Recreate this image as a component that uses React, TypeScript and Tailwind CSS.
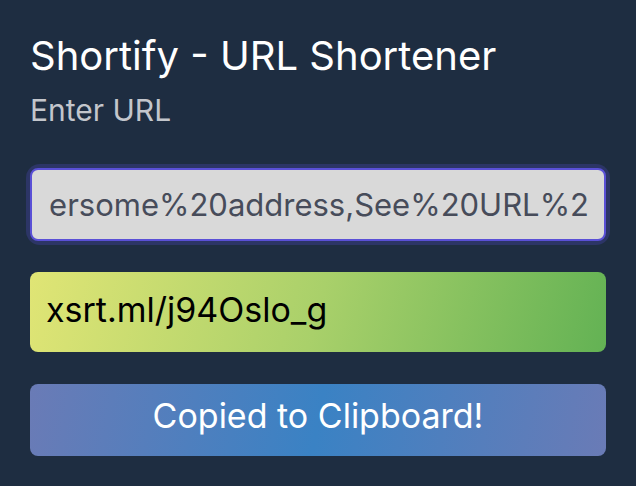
import React from "react";

export default function App() {
  return (
    <div
      className="min-h-screen w-full bg-[#1e2d41] px-[30px] pt-[32px]"
      style={{ fontFamily: "Inter, 'Noto Sans', sans-serif" }}
    >
      <h1 className="text-[40px] leading-[48px] font-normal text-white">
        Shortify - URL Shortener
      </h1>
      <p className="mt-[12px] text-[30px] leading-[36px] text-[#c3c6cc]">Enter URL</p>

      <div className="mt-[40px] rounded-[10px] ring-4 ring-[#2c3566]">
        <div className="flex h-[73px] items-center justify-end overflow-hidden rounded-[8px] border-2 border-[#5a50d6] bg-[#d9d9d9] pr-[15px] pl-[18px]">
          <span className="whitespace-nowrap text-[31px] leading-[38px] text-[#474c5a]">
            ersome%20address,See%20URL%2
          </span>
        </div>
      </div>

      <div className="mt-[31px] flex h-[80px] items-center rounded-[8px] bg-[linear-gradient(105deg,#e0e575_0%,#a9d06a_50%,#63b254_100%)] px-[16px] pb-[5px]">
        <span className="text-[34px] leading-[40px] text-black">xsrt.ml/j94Oslo_g</span>
      </div>

      <button className="mt-[32px] flex h-[72px] w-full items-center justify-center rounded-[8px] bg-[linear-gradient(100deg,#6a7bb6_0%,#3a82c4_50%,#6a7bb6_100%)] pb-[9px] text-[34px] leading-[40px] text-white">
        Copied to Clipboard!
      </button>
    </div>
  );
}
